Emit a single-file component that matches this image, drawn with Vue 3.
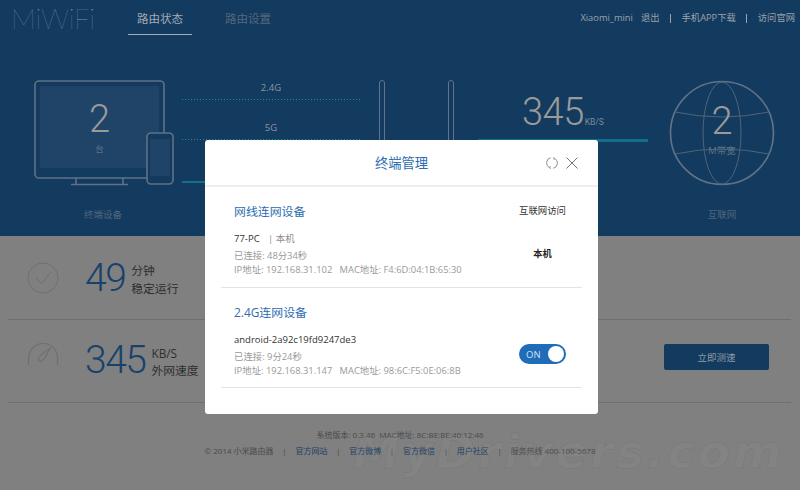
<script setup>
const footLinks = ['官方网站', '官方微博', '官方微信', '用户社区']
</script>

<template>
  <div class="page">
    <section class="top">
      <header class="nav">
        <div class="logo">MiWiFi</div>
        <nav class="tabs">
          <span class="tab active">路由状态</span>
          <span class="tab">路由设置</span>
        </nav>
        <div class="links">
          <span>Xiaomi_mini</span><span class="exit">退出</span>
          <i></i><span>手机APP下载</span>
          <i></i><span>访问官网</span>
        </div>
      </header>

      <div class="stats">
        <div class="device">
          <div class="device-art">
            <svg class="monitor" width="140" height="106" viewBox="0 0 140 106" fill="none">
              <rect x="1" y="1" width="129" height="97" rx="4" stroke="#5f7286" stroke-width="1.6" fill="#133a5f"/>
              <rect x="6" y="6" width="119" height="82" fill="#1f4468"/>
              <path d="M42 98v6M89 98v6M37 104.500h57" stroke="#5f7286" stroke-width="1.600"/>
            </svg>
            <div class="count"><b>2</b><small>台</small></div>
            <svg class="phone" width="28" height="53" viewBox="0 0 28 53">
              <rect x="1" y="1" width="26" height="51" rx="4" fill="#133a5f" stroke="#5f7286" stroke-width="1.600"/>
              <rect x="4" y="7" width="20" height="37" fill="#1f4468"/>
            </svg>
          </div>
          <div class="stat-label">终端设备</div>
        </div>

        <div class="wires">
          <div class="wire-label">2.4G</div>
          <div class="dots"></div>
          <div class="wire-label second">5G</div>
          <div class="dots"></div>
          <div class="solid"></div>
        </div>

        <div class="antenna"></div>
        <div class="antenna right"></div>

        <div class="speed">
          <div class="speed-num">345<small>KB/S</small></div>
          <div class="speed-bar"></div>
        </div>

        <div class="net">
          <div class="globe">
            <svg width="106" height="106" viewBox="0 0 106 106" fill="none" stroke="#506579">
              <circle cx="53" cy="53" r="51.500" stroke="#5f7286" stroke-width="1.700"/>
              <ellipse cx="53" cy="53" rx="19" ry="51" stroke-width="1"/>
              <path d="M6 32Q53 42 100 32M6 74Q53 64 100 74" stroke-width="1"/>
            </svg>
            <div class="band"><b>2</b><small>M带宽</small></div>
          </div>
          <div class="stat-label net-label">互联网</div>
        </div>
      </div>
    </section>

    <main class="rows">
      <div class="row">
        <svg class="row-icon" width="32" height="32" viewBox="0 0 32 32" fill="none" stroke="#6f6f6f">
          <circle cx="16" cy="16" r="15"/>
          <path d="M9 16l5.500 5.500L24 10" />
        </svg>
        <div class="big">49</div>
        <div class="unit"><span>分钟</span><span>稳定运行</span></div>
      </div>
      <div class="row">
        <svg class="row-icon" width="32" height="24" viewBox="0 0 32 24" fill="none" stroke="#6f6f6f" stroke-width="1.200">
          <path d="M1.500 23V16A14.500 14.500 0 0 1 30.500 16V23"/>
          <path d="M23 6.500C21 11 18.500 15 15.500 18.500C13 20.500 10.500 18.500 12 15.500C14.500 12 18.500 9 23 6.500Z"/>
        </svg>
        <div class="big">345</div>
        <div class="unit"><span>KB/S</span><span>外网速度</span></div>
        <button class="test">立即测速</button>
      </div>
    </main>

    <footer class="foot">
      <div class="foot-sys">系统版本: 0.3.46&nbsp;&nbsp;MAC地址: 8C:BE:BE:40:12:46</div>
      <div class="foot-line">
        <span>© 2014 小米路由器</span>
        <template v-for="l in footLinks" :key="l"><i>|</i><a>{{ l }}</a></template>
        <i>|</i><span>服务热线 400-100-5678</span>
      </div>
    </footer>

    <div class="mark">MyDrivers.com</div>

    <div class="modal">
      <div class="modal-head">
        <h2>终端管理</h2>
        <div class="tools">
          <svg width="12" height="12" viewBox="0 0 12 12" fill="none" stroke="#8a8f94" stroke-width="1">
            <path d="M4.800 .7A5.300 5.300 0 0 0 3.600 10.700M7.200 11.300A5.300 5.300 0 0 0 8.400 1.300"/>
            <path d="M7 .6L8.500 1.300L7.800 2.800M5 11.400L3.500 10.700L4.200 9.200"/>
          </svg>
          <svg width="12" height="12" viewBox="0 0 12 12" stroke="#6f7376" stroke-width="1"><path d="M.5.500l11 11M11.500.500l-11 11"/></svg>
        </div>
      </div>

      <div class="modal-body">
        <section class="group">
          <div class="group-head"><h3>网线连网设备</h3><span>互联网访问</span></div>
          <div class="item">
            <div class="info">
              <div class="name">77-PC <em>| 本机</em></div>
              <div class="meta"><span>已连接: 48分34秒</span><span>IP地址: 192.168.31.102&nbsp;&nbsp;&nbsp;MAC地址: F4:6D:04:1B:65:30</span></div>
            </div>
            <strong class="local">本机</strong>
          </div>
        </section>
        <section class="group last">
          <div class="group-head"><h3>2.4G连网设备</h3></div>
          <div class="item">
            <div class="info">
              <div class="name">android-2a92c19fd9247de3</div>
              <div class="meta"><span>已连接: 9分24秒</span><span>IP地址: 192.168.31.147&nbsp;&nbsp;&nbsp;MAC地址: 98:6C:F5:0E:06:8B</span></div>
            </div>
            <div class="toggle"><span>ON</span><b></b></div>
          </div>
        </section>
      </div>
    </div>
  </div>
</template>

<style>
html, body { margin: 0; background: #808080; }
</style>

<style scoped>
* { box-sizing: border-box; }
.page {
  position: relative; width: 800px; height: 490px; overflow: hidden; background: #808080;
  font-family: "Open Sans", "Noto Sans CJK SC", sans-serif; font-size: 9.5px; color: #444;
}
.top { height: 236px; background: #133a5f; }
.nav { display: flex; height: 36px; }
.logo { margin: 0 0 0 11px; width: 117px; font: 100 28px/36px Lato, sans-serif; color: #8492a1; letter-spacing: -.3px; }
.tabs { display: flex; gap: 24px; }
.tab { width: 64px; height: 35px; padding-top: 11px; text-align: center; font-size: 11.500px; line-height: 16px; color: #55687d; }
.tab.active { color: #a3abb3; border-bottom: 1px solid #a3abb3; }
.links { margin-left: auto; padding: 11px 5px 0 0; display: flex; align-items: flex-start; font-size: 9.300px; line-height: 14px; color: #9aa3ab; }
.links .exit { margin-left: 8px; }
.links i { width: 1px; height: 9px; margin: 3px 10.500px 0; background: #9aa3ab; }

.stats { position: relative; display: flex; height: 200px; padding: 44px 0 0 34px; }
.device { width: 148px; }
.device-art { position: relative; height: 106px; }
.monitor { display: block; }
.count { position: absolute; left: 0; top: 17px; width: 131px; display: flex; flex-direction: column; align-items: center; color: #9a9a9a; }
.count b { font: 300 38px/44px Roboto, sans-serif; }
.count small { font-size: 8.500px; line-height: 12px; color: #5f7286; margin-top: 2px; }
.phone { position: absolute; left: 112px; top: 52px; }
.stat-label { margin-top: 22px; width: 138px; text-align: center; font-size: 9.500px; line-height: 14px; color: #4f667d; }
.wires { width: 178px; padding-top: 1px; }
.wire-label { text-align: center; line-height: 14px; font-size: 9.500px; color: #8b96a1; }
.wire-label.second { margin-top: 21px; }
.dots { height: 1px; margin-top: 4px; background: repeating-linear-gradient(90deg, #1f8aa0 0 1.500px, transparent 1.500px 3px); }
.solid { height: 2px; margin-top: 41px; background: #146f8c; }
.antenna { position: absolute; left: 379px; top: 44px; width: 6px; height: 130px; border: 1px solid #62748a; border-radius: 3px 3px 0 0; }
.antenna.right { left: 448px; }
.speed { position: absolute; left: 478px; top: 51px; width: 170px; }
.speed-num { height: 52px; padding-left: 44px; font: 300 38px/50px Roboto, sans-serif; color: #9a9a9a; white-space: nowrap; letter-spacing: -.5px; }
.speed-num small { font-size: 8.500px; font-weight: 400; color: #7f8c99; margin-left: 1px; letter-spacing: 0; }
.speed-bar { height: 3px; margin-top: -.5px; background: #146f8c; }
.net { position: absolute; left: 669px; top: 44px; width: 106px; }
.globe { position: relative; height: 106px; }
.globe svg { display: block; }
.band { position: absolute; inset: 0; padding-top: 19px; display: flex; flex-direction: column; align-items: center; color: #9a9a9a; }
.band b { font: 300 38px/44px Roboto, sans-serif; }
.band small { font-size: 9.500px; line-height: 12px; color: #5f7286; margin-top: 2px; }
.net-label { width: 106px; }

.rows { padding: 0 9px 0 8px; }
.row { position: relative; display: flex; align-items: center; height: 84px; border-bottom: 1px solid #6f6f6f; padding-left: 19px; }
.row + .row { height: 83px; }
.row-icon { flex: none; width: 32px; }
.row + .row .row-icon { margin-top: -14px; }
.big { margin-left: 26px; font: 300 39px/46px Roboto, sans-serif; letter-spacing: -1.500px; color: #17426d; }
.row + .row .big { margin-top: -2px; }
.unit { display: flex; flex-direction: column; margin-left: 6px; font-size: 11.800px; line-height: 17.500px; color: #2e2e2e; margin-top: 4px; }
.row + .row .unit { margin-top: 2px; }
.test {
  position: absolute; left: 656px; top: 24px; width: 105px; height: 26px; border: 0; border-radius: 2px;
  background: #133a5f; color: #8f9aa5; font: 9.500px "Open Sans", "Noto Sans CJK SC", sans-serif;
}

.foot { padding-top: 24px; text-align: center; font-size: 8px; line-height: 16px; color: #4a4a4a; }
.foot-line { display: flex; justify-content: center; gap: 8.700px; }
.foot-line i { font-style: normal; }
.foot-line a { color: #1d3f66; }
.mark {
  position: absolute; left: 353px; top: 422px; font: italic 700 47px/60px "DejaVu Sans", sans-serif;
  color: rgba(255,255,255,.03); -webkit-text-stroke: .6px rgba(60,60,60,.12); white-space: nowrap; letter-spacing: 2.700px;
}

.modal { position: absolute; left: 205px; top: 140px; width: 393px; height: 274px; background: #fff; border-radius: 3px; }
.modal-head { position: relative; height: 47px; border-bottom: 2px solid #eee; text-align: center; }
.modal-head h2 { margin: 0; font-size: 13.300px; font-weight: 400; line-height: 46px; color: #2d6cb0; }
.tools { position: absolute; right: 20px; top: 17px; display: flex; align-items: center; gap: 8px; }
.tools svg { display: block; }
.modal-body { padding: 0 16px; }
.group { padding: 0 0 10px; border-bottom: 1px solid #e4e4e4; }
.group.last { padding-bottom: 9px; }
.group-head { display: flex; justify-content: space-between; align-items: center; height: 45px; padding: 1px 16px 0 13px; }
.group-head h3 { margin: 0; font-size: 11.900px; font-weight: 400; color: #2d6cb0; }
.group-head span { font-size: 9.400px; color: #333; }
.item { display: flex; justify-content: space-between; align-items: center; padding: 0 16px 0 13px; }
.name { font-size: 9.500px; line-height: 14px; color: #333; }
.name em { font-style: normal; color: #8d8d8d; margin-left: 6px; }
.meta { margin-top: 3px; display: flex; flex-direction: column; font-size: 9.400px; line-height: 14px; color: #999; }
.local { width: 47px; text-align: center; font-size: 9.300px; color: #222; margin-bottom: 4px; }
.toggle { display: flex; align-items: center; justify-content: space-between; width: 47px; height: 20px; padding: 0 2px 0 7px; border-radius: 10px; background: #1f6db8; color: #cfe0f2; font-size: 9.500px; margin-bottom: 3px; }
.toggle b { width: 16px; height: 16px; border-radius: 50%; background: #fff; }
</style>
